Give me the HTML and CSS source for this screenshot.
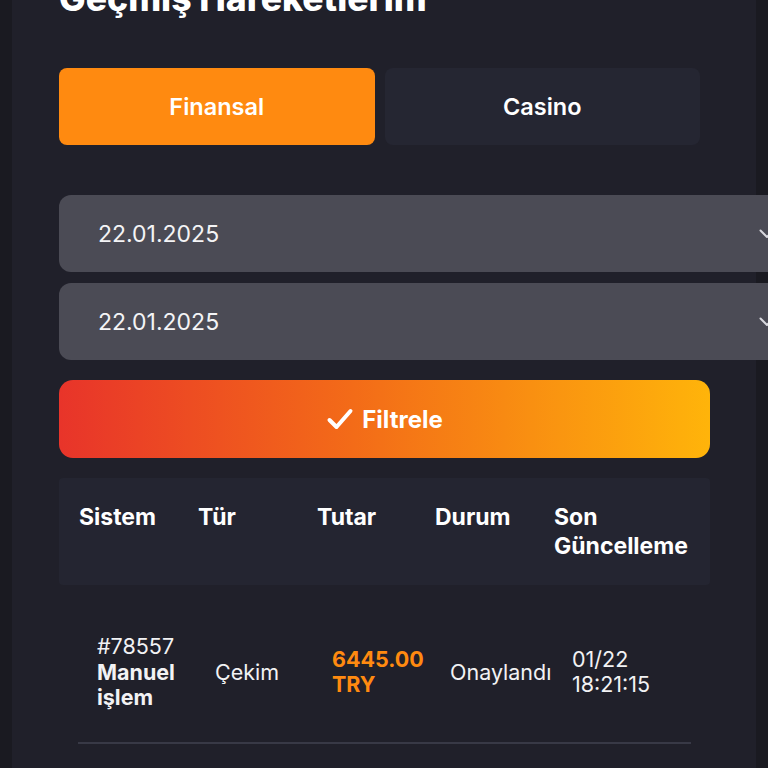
FILE: index.html
```html
<!DOCTYPE html>
<html lang="tr">
<head>
    <meta charset="UTF-8">
    <meta name="viewport" content="width=device-width, initial-scale=1.0">
    <title>Geçmiş Hareketlerim</title>
    <link rel="stylesheet" href="styles.css">
</head>
<body>

    <div class="page">
        <h1 class="title">Geçmiş Hareketlerim</h1>

        <!-- sekmeler -->
        <div class="tabs">
            <button class="tab active">Finansal</button>
            <button class="tab">Casino</button>
        </div>

        <!-- tarih aralığı -->
        <div class="dates">
            <div class="date-field">
                <span>22.01.2025</span>
                <svg class="chevron" width="16" height="10" viewBox="0 0 16 10"><path d="M1.5 1.5 L8 8 L14.5 1.5" fill="none" stroke="#d8d8de" stroke-width="2" stroke-linecap="round" stroke-linejoin="round"/></svg>
            </div>
            <div class="date-field">
                <span>22.01.2025</span>
                <svg class="chevron" width="16" height="10" viewBox="0 0 16 10"><path d="M1.5 1.5 L8 8 L14.5 1.5" fill="none" stroke="#d8d8de" stroke-width="2" stroke-linecap="round" stroke-linejoin="round"/></svg>
            </div>
        </div>

        <button class="filter-btn">
            <svg width="28" height="24" viewBox="0 0 28 24"><path d="M3.5 13 L10.5 20 L24.5 4" fill="none" stroke="#fff" stroke-width="4" stroke-linecap="round" stroke-linejoin="round"/></svg>
            Filtrele
        </button>

        <!-- işlem tablosu -->
        <div class="table">
            <div class="thead">
                <div>Sistem</div>
                <div>Tür</div>
                <div>Tutar</div>
                <div>Durum</div>
                <div>Son Güncelleme</div>
            </div>
            <div class="row">
                <div>#78557<br><b>Manuel işlem</b></div>
                <div>Çekim</div>
                <div class="amount">6445.00 TRY</div>
                <div>Onaylandı</div>
                <div>01/22<br>18:21:15</div>
            </div>
        </div>
    </div>

</body>
</html>
```

FILE: styles.css
```css
body {
    margin: 0;
    background-color: #1a1a21;
    font-family: Inter, "Noto Sans", sans-serif;
    color: #fff;
    overflow: hidden;
}

.page {
    margin: 0 12px;
    min-height: 100vh;
    background-color: #20202a;
    padding: 0 47px 40px;
    box-sizing: border-box;
}

.title {
    margin: -21px 0 49px;
    font-size: 35.5px;
    line-height: 40px;
    font-weight: 800;
}

.tabs {
    display: flex;
    gap: 10px;
    width: 641px;
}

.tab {
    flex: 1;
    height: 77px;
    border: none;
    border-radius: 8px;
    background-color: #252632;
    color: #fff;
    font-family: inherit;
    font-size: 23.5px;
    font-weight: 600;
}

.tab.active {
    background-color: #ff8a10;
}

.dates {
    margin-top: 50px;
    display: flex;
    flex-direction: column;
    gap: 11px;
}

.date-field {
    width: 740px;
    height: 77px;
    border-radius: 12px;
    background-color: #4b4b55;
    display: flex;
    align-items: center;
    justify-content: space-between;
    padding: 0 24px 0 39px;
    box-sizing: border-box;
    font-size: 23px;
    color: #f4f4f6;
}

.filter-btn {
    margin-top: 20px;
    width: 651px;
    height: 78px;
    border: none;
    border-radius: 14px;
    background: linear-gradient(90deg, #e8342a 0%, #f36b18 45%, #ffb40a 100%);
    color: #fff;
    font-family: inherit;
    font-size: 24px;
    font-weight: 700;
    display: flex;
    align-items: center;
    justify-content: center;
    gap: 8px;
}

.table {
    margin-top: 20px;
    width: 651px;
}

.thead {
    display: grid;
    grid-template-columns: 119px 119px 118px 119px 1fr;
    padding: 25px 20px 24px;
    background-color: #242531;
    border-radius: 4px;
    font-size: 23px;
    font-weight: 700;
    line-height: 29px;
}

.row {
    display: grid;
    grid-template-columns: 118px 117px 118px 122px 1fr;
    align-items: center;
    margin: 0 19px;
    padding: 49px 0 31px 19px;
    border-bottom: 2px solid #383946;
    font-size: 21.5px;
    line-height: 25.5px;
    color: #f2f2f4;
}

.row b {
    font-weight: 700;
}

.amount {
    color: #ff8a10;
    font-weight: 700;
}
```
